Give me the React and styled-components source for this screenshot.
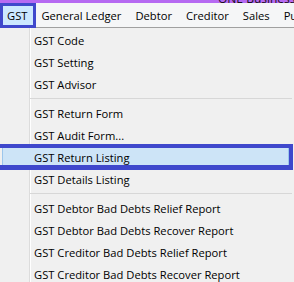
import React from "react";
import styled, { createGlobalStyle } from "styled-components";

const GlobalStyle = createGlobalStyle`
  html, body { margin: 0; padding: 0; }
  body {
    background: #f0f0f0;
    font-family: "Open Sans", "Noto Sans", sans-serif;
    font-size: 11.2px;
    color: #000;
    overflow: hidden;
  }
`;

const ANNOT = "#3f48cc";

const Window = styled.div`
  width: 294px;
  height: 282px;
  display: flex;
  flex-direction: column;
  overflow: hidden;
`;

const TitleBar = styled.div`
  height: 3px;
  flex: none;
  background: #b66af2;
  overflow: hidden;
  display: flex;
  justify-content: flex-start;
  padding-left: 218px;
`;

const TitleText = styled.span`
  font-size: 12px;
  line-height: 12px;
  margin-top: -7px;
  color: #1a1020;
  white-space: nowrap;
`;

const MenuBar = styled.div`
  height: 24px;
  flex: none;
  display: flex;
  align-items: stretch;
  background: #f5f6f7;
  border-bottom: 1px solid #a0a0a0;
  position: relative;
  z-index: 2;
`;

const BarItem = styled.div`
  padding: 0 7px;
  display: flex;
  align-items: center;
  white-space: nowrap;
  position: relative;
  background: ${(p) => (p.$open ? "#cce8ff" : "transparent")};
  ${(p) =>
    p.$open &&
    `
    &::after {
      content: "";
      position: absolute;
      left: 0;
      top: 0;
      right: -2px;
      bottom: -1px;
      border: 3px solid ${ANNOT};
    }
  `}
`;

const Dropdown = styled.div`
  flex: 1;
  position: relative;
  padding-top: 1px;
  background: linear-gradient(
    to right,
    #f0f0f0 0,
    #f0f0f0 29px,
    #dcdcdc 29px,
    #dcdcdc 30px,
    #ffffff 30px,
    #ffffff 31px,
    #f0f0f0 31px
  );
`;

const Item = styled.div`
  height: 22px;
  display: flex;
  align-items: center;
  padding-left: 34px;
  white-space: nowrap;
  position: relative;
  ${(p) =>
    p.$active &&
    `
    margin: 0 5px 0 2px;
    padding-left: 31px;
    background: #cde4f7;
    border: 1px solid #9cc6ec;
    height: 20px;
    &::after {
      content: "";
      position: absolute;
      left: -10px;
      right: -5px;
      top: -3px;
      bottom: -3px;
      border: 4px solid ${ANNOT};
      border-bottom-width: 5px;
    }
  `}
`;

const Separator = styled.div`
  height: 7px;
  display: flex;
  align-items: center;
  padding-left: 30px;
  padding-right: 2px;
  &::before {
    content: "";
    flex: 1;
    height: 1px;
    background: #d7d7d7;
  }
`;

const groups = [
  ["GST Code", "GST Setting", "GST Advisor"],
  ["GST Return Form", "GST Audit Form...", "GST Return Listing", "GST Details Listing"],
  [
    "GST Debtor Bad Debts Relief Report",
    "GST Debtor Bad Debts Recover Report",
    "GST Creditor Bad Debts Relief Report",
    "GST Creditor Bad Debts Recover Report",
  ],
];

const menus = ["GST", "General Ledger", "Debtor", "Creditor", "Sales", "Purchase"];

export default function App() {
  return (
    <Window>
      <GlobalStyle />
      <TitleBar>
        <TitleText>QNE Business Solutions</TitleText>
      </TitleBar>
      <MenuBar>
        {menus.map((m, i) => (
          <BarItem key={m} $open={i === 0}>
            {m}
          </BarItem>
        ))}
      </MenuBar>
      <Dropdown>
        {groups.map((g, gi) => (
          <React.Fragment key={gi}>
            {gi > 0 && <Separator />}
            {g.map((label) => (
              <Item key={label} $active={label === "GST Return Listing"}>
                {label}
              </Item>
            ))}
          </React.Fragment>
        ))}
      </Dropdown>
    </Window>
  );
}
